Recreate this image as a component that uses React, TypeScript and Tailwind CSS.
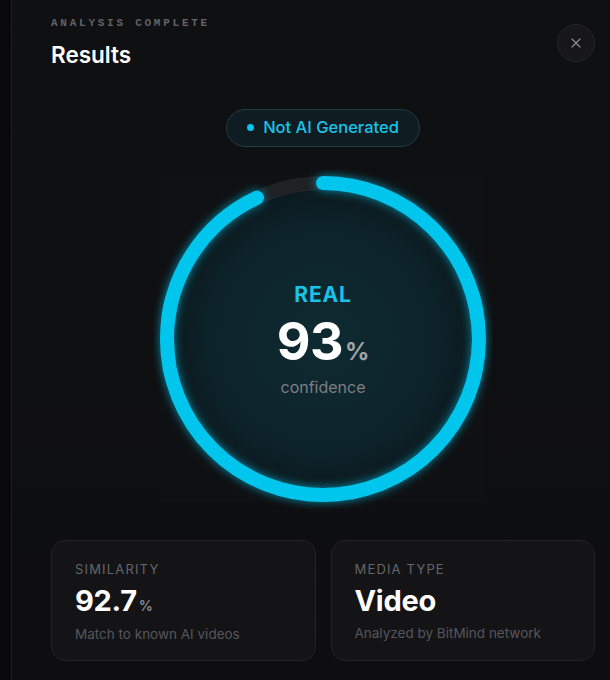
import { X } from "lucide-react"

const R = 156
const C = 2 * Math.PI * R

function ConfidenceRing({ value }: { value: number }) {
  const dash = (value / 100) * C
  return (
    <div className="relative w-[340px] h-[340px]">
      <svg width="340" height="340" viewBox="0 0 340 340" className="absolute inset-0">
        <defs>
          <radialGradient id="inner" cx="50%" cy="50%" r="50%">
            <stop offset="0%" stopColor="#0f2a31" />
            <stop offset="75%" stopColor="#0d232a" />
            <stop offset="100%" stopColor="#0b1a1f" />
          </radialGradient>
          <filter id="glow" x="-20%" y="-20%" width="140%" height="140%">
            <feGaussianBlur stdDeviation="5" result="b" />
            <feComponentTransfer in="b" result="soft">
              <feFuncA type="linear" slope="0.7" />
            </feComponentTransfer>
            <feMerge>
              <feMergeNode in="soft" />
              <feMergeNode in="SourceGraphic" />
            </feMerge>
          </filter>
        </defs>
        <rect x="7" y="7" width="326" height="326" fill="rgba(40,90,100,0.035)" />
        <circle cx="170" cy="170" r={R - 6} fill="url(#inner)" />
        <circle cx="170" cy="170" r={R} fill="none" stroke="rgba(255,255,255,0.07)" strokeWidth="14" />
        <circle
          cx="170"
          cy="170"
          r={R}
          fill="none"
          stroke="#04c6ee"
          strokeWidth="14"
          strokeLinecap="round"
          strokeDasharray={`${dash} ${C}`}
          transform="rotate(-90 170 170)"
          filter="url(#glow)"
        />
      </svg>
      <div className="absolute inset-0 flex flex-col items-center justify-center pt-[2px]">
        <span className="text-[21px] leading-none font-bold tracking-[0.04em] text-[#19c3e8]">REAL</span>
        <div className="flex items-baseline mt-[18px]">
          <span className="text-[52px] leading-[38px] font-bold text-white tracking-[-0.01em]">93</span>
          <span className="text-[24px] leading-none font-bold text-[#a3a3ab] ml-[2px]">%</span>
        </div>
        <span className="text-[16px] leading-none text-[#7d7e86] mt-[15px]">confidence</span>
      </div>
    </div>
  )
}

function StatCard({
  label,
  value,
  suffix,
  note,
}: {
  label: string
  value: string
  suffix?: string
  note: string
}) {
  return (
    <div className="flex flex-col rounded-[14px] border border-[#232327] bg-[#141416] px-[23px] pt-[22px] h-[121px]">
      <span className="text-[13px] leading-none tracking-[0.09em] text-[#64646c]">{label}</span>
      <div className="flex items-baseline mt-[11px]">
        <span className="text-[29px] leading-[28px] font-bold text-white tracking-[-0.01em]">{value}</span>
        {suffix && <span className="text-[14px] font-semibold text-[#8a8a92] ml-[2px]">{suffix}</span>}
      </div>
      <span className="text-[13.5px] leading-none text-[#55565c] mt-[12px]">{note}</span>
    </div>
  )
}

export default function App() {
  return (
    <div
      className="flex w-[610px] h-[680px] overflow-hidden bg-[#0e0f11]"
      style={{ fontFamily: "Inter, 'Noto Sans', sans-serif" }}
    >
      <div className="w-[12px] shrink-0 bg-[#09090b] border-r border-[#1f1f23]" />
      <div className="flex-1 flex flex-col pl-[39px] pr-[15px] bg-gradient-to-b from-[#0f1012] to-[#0e0e10]">
        <div className="flex items-start justify-between pt-[18px]">
          <div className="flex flex-col">
            <span className="text-[11px] leading-none font-bold tracking-[0.25em] text-[#626269] font-['Liberation_Mono',monospace]">
              ANALYSIS COMPLETE
            </span>
            <span className="text-[22.5px] leading-none font-semibold text-white mt-[15px]">Results</span>
          </div>
          <button className="w-[38px] h-[38px] mt-[6px] rounded-full border border-[#26262b] bg-[#17171a] flex items-center justify-center text-[#8b8b93]">
            <X size={16} strokeWidth={1.75} />
          </button>
        </div>

        <div className="flex justify-center mt-[42px]">
          <div className="flex items-center gap-[9px] h-[38px] px-[20px] rounded-full border border-[#1b3d46] bg-[#0f1d22]">
            <span className="w-[7px] h-[7px] rounded-full bg-[#04c6ee]" />
            <span className="text-[16.5px] font-medium text-[#19c3e8]">Not AI Generated</span>
          </div>
        </div>

        <div className="flex justify-center mt-[22px]">
          <ConfidenceRing value={93} />
        </div>

        <div className="grid grid-cols-2 gap-[15px] mt-[31px]">
          <StatCard label="SIMILARITY" value="92.7" suffix="%" note="Match to known AI videos" />
          <StatCard label="MEDIA TYPE" value="Video" note="Analyzed by BitMind network" />
        </div>
      </div>
    </div>
  )
}
